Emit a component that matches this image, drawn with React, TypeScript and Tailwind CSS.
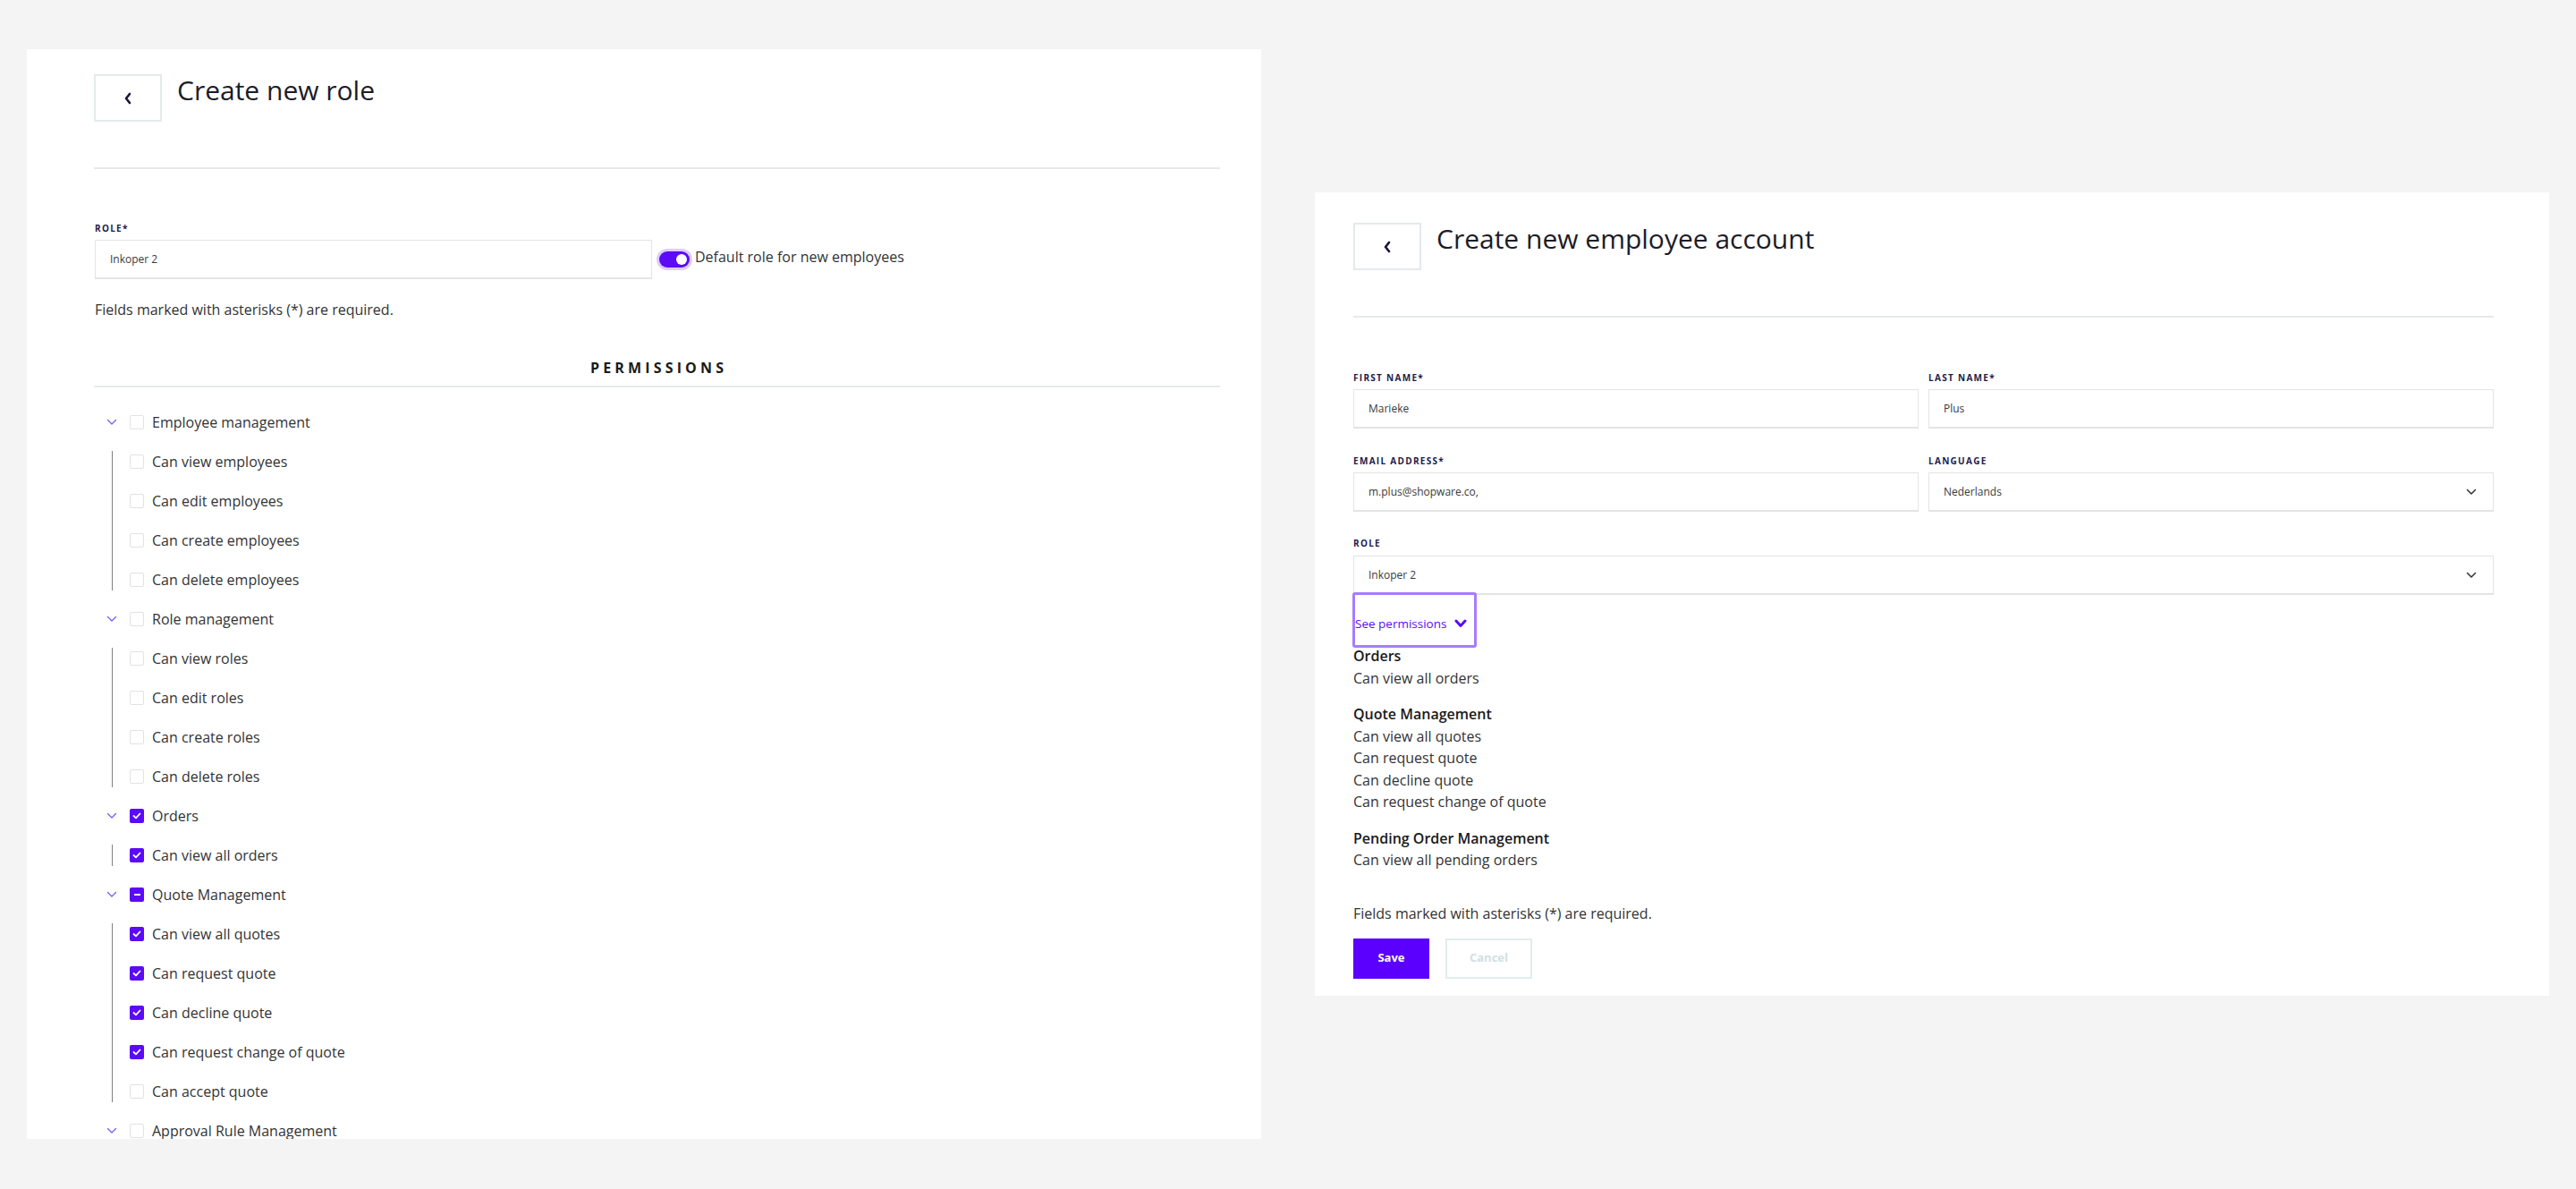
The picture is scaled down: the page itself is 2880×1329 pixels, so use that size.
import React from "react";

const FONT = "font-['Open_Sans','Liberation_Sans',sans-serif]";

type Perm = { label: string; checked?: boolean };
type Group = { label: string; state: "none" | "checked" | "partial"; children: Perm[] };

const TREE: Group[] = [
  {
    label: "Employee management",
    state: "none",
    children: [
      { label: "Can view employees" },
      { label: "Can edit employees" },
      { label: "Can create employees" },
      { label: "Can delete employees" },
    ],
  },
  {
    label: "Role management",
    state: "none",
    children: [
      { label: "Can view roles" },
      { label: "Can edit roles" },
      { label: "Can create roles" },
      { label: "Can delete roles" },
    ],
  },
  {
    label: "Orders",
    state: "checked",
    children: [{ label: "Can view all orders", checked: true }],
  },
  {
    label: "Quote Management",
    state: "partial",
    children: [
      { label: "Can view all quotes", checked: true },
      { label: "Can request quote", checked: true },
      { label: "Can decline quote", checked: true },
      { label: "Can request change of quote", checked: true },
      { label: "Can accept quote" },
    ],
  },
  { label: "Approval Rule Management", state: "none", children: [] },
];

const SUMMARY: { title: string; items: string[] }[] = [
  { title: "Orders", items: ["Can view all orders"] },
  {
    title: "Quote Management",
    items: [
      "Can view all quotes",
      "Can request quote",
      "Can decline quote",
      "Can request change of quote",
    ],
  },
  { title: "Pending Order Management", items: ["Can view all pending orders"] },
];

function BackButton() {
  return (
    <button className="w-[76px] h-[53px] shrink-0 border-2 border-[#e3eaec] bg-white grid place-items-center">
      <svg width="10" height="14" viewBox="0 0 10 14" fill="none">
        <path d="M7 2 L3 7 L7 12" stroke="#15153f" strokeWidth="2.6" strokeLinecap="round" strokeLinejoin="round" />
      </svg>
    </button>
  );
}

function Header({ title }: { title: string }) {
  return (
    <>
      <div className="flex items-start">
        <BackButton />
        <h1 className="ml-[17px] text-[30px] leading-[36px] font-normal text-[#1c1c28]">
          {title}
        </h1>
      </div>
      <div className="mt-[51px] h-[2px] bg-[#e7e9ea]" />
    </>
  );
}

function Label({ children }: { children: React.ReactNode }) {
  return (
    <div className="text-[10px] leading-[12px] font-bold uppercase tracking-[0.13em] text-[#1d1d4b]">
      {children}
    </div>
  );
}

function Field({ value, select }: { value: string; select?: boolean }) {
  return (
    <div className="h-[44px] border border-[#e4e4e4] border-b-2 bg-white flex items-center pl-[16px] pr-[18px] text-[12px] text-[#3a3a3a]">
      <span className="flex-1">{value}</span>
      {select && (
        <svg width="12" height="8" viewBox="0 0 12 8" fill="none">
          <path d="M1.5 1.5 L6 6 L10.5 1.5" stroke="#333" strokeWidth="1.5" strokeLinecap="round" strokeLinejoin="round" />
        </svg>
      )}
    </div>
  );
}

function Checkbox({ state }: { state: "none" | "checked" | "partial" }) {
  if (state === "none") {
    return <span className="w-[16px] h-[16px] shrink-0 rounded-[2px] border border-[#e2e2e2] bg-white" />;
  }
  return (
    <span className="w-[16px] h-[16px] shrink-0 rounded-[2px] bg-[#5b0bf5] grid place-items-center">
      {state === "checked" ? (
        <svg width="10" height="8" viewBox="0 0 10 8" fill="none">
          <path d="M1.5 4 L4 6.3 L8.5 1.5" stroke="white" strokeWidth="1.8" strokeLinecap="round" strokeLinejoin="round" />
        </svg>
      ) : (
        <span className="w-[7px] h-[2px] bg-white" />
      )}
    </span>
  );
}

function TreeChevron() {
  return (
    <svg width="12" height="8" viewBox="0 0 12 8" fill="none">
      <path d="M1.5 1.5 L6 6 L10.5 1.5" stroke="#7a5cf0" strokeWidth="1.3" strokeLinecap="round" strokeLinejoin="round" />
    </svg>
  );
}

function TreeRow({ label, state, chevron }: { label: string; state: "none" | "checked" | "partial"; chevron?: boolean }) {
  return (
    <div className="h-[44px] flex items-center">
      <div className="w-[40px] flex justify-center">{chevron && <TreeChevron />}</div>
      <Checkbox state={state} />
      <span className="ml-[9px] text-[16px] text-[#333]">{label}</span>
    </div>
  );
}

function RoleCard() {
  return (
    <div className="w-[1380px] h-[1218px] shrink-0 bg-white overflow-hidden pl-[75px] pr-[46px] pt-[28px]">
      <Header title="Create new role" />

      <div className="mt-[60px] pl-[1px]">
        <Label>Role*</Label>
        <div className="mt-[7px] flex items-center">
          <div className="w-[623px]">
            <Field value="Inkoper 2" />
          </div>
          <span className="ml-[5px] w-[40px] h-[24px] rounded-full bg-[#ddccff] grid place-items-center">
            <span className="w-[34px] h-[18px] rounded-full bg-[#5b0bf5] flex items-center justify-end pr-[3px]">
              <span className="w-[12px] h-[12px] rounded-full bg-white" />
            </span>
          </span>
          <span className="ml-[3px] -mt-[6px] text-[16px] text-[#333]">Default role for new employees</span>
        </div>
        <p className="mt-[24px] text-[16px] leading-[20px] text-[#333]">
          Fields marked with asterisks (*) are required.
        </p>
      </div>

      <h2 className="mt-[45px] pl-[0.26em] text-center text-[16px] leading-[20px] font-bold uppercase tracking-[0.26em] text-[#1a1a1a]">
        Permissions
      </h2>
      <div className="mt-[10px] h-[2px] bg-[#e7e9ea]" />

      <div className="mt-[17px]">
        {TREE.map((g) => (
          <div key={g.label}>
            <TreeRow label={g.label} state={g.state} chevron />
            {g.children.length > 0 && (
              <div className="flex">
                <div className="w-[40px] flex justify-center py-[10px]">
                  <div className="w-px bg-[#808080]" />
                </div>
                <div className="-ml-[40px] flex-1">
                  {g.children.map((c) => (
                    <TreeRow key={c.label} label={c.label} state={c.checked ? "checked" : "none"} />
                  ))}
                </div>
              </div>
            )}
          </div>
        ))}
      </div>
    </div>
  );
}

function EmployeeCard() {
  return (
    <div className="w-[1380px] h-[898px] shrink-0 mt-[160px] bg-white pl-[43px] pr-[62px] pt-[34px]">
      <Header title="Create new employee account" />

      <div className="mt-[61px] grid grid-cols-2 gap-x-[11px]">
        <div>
          <Label>First name*</Label>
          <div className="mt-[7px]">
            <Field value="Marieke" />
          </div>
        </div>
        <div>
          <Label>Last name*</Label>
          <div className="mt-[7px]">
            <Field value="Plus" />
          </div>
        </div>
        <div className="mt-[30px]">
          <Label>Email address*</Label>
          <div className="mt-[7px]">
            <Field value="m.plus@shopware.co," />
          </div>
        </div>
        <div className="mt-[30px]">
          <Label>Language</Label>
          <div className="mt-[7px]">
            <Field value="Nederlands" select />
          </div>
        </div>
      </div>

      <div className="mt-[29px]">
        <Label>Role</Label>
        <div className="mt-[8px]">
          <Field value="Inkoper 2" select />
        </div>
      </div>

      <button className="-mt-[3px] -ml-[1px] w-[139px] h-[62px] border-[3px] border-[#a77cff] rounded-[3px] flex items-center pt-[8px] text-[13.5px] text-[#5b0bf5]">
        <span>See permissions</span>
        <svg className="ml-[9px]" width="14" height="10" viewBox="0 0 14 10" fill="none">
          <path d="M2 2 L7 7.5 L12 2" stroke="#5b0bf5" strokeWidth="3" strokeLinecap="round" strokeLinejoin="round" />
        </svg>
      </button>

      <div className="-mt-[3px] text-[16px] leading-[24.5px] text-[#333]">
        {SUMMARY.map((s, i) => (
          <div key={s.title} className={i > 0 ? "mt-[16px]" : ""}>
            <div className="font-semibold text-[#1a1a1a]">{s.title}</div>
            {s.items.map((it) => (
              <div key={it}>{it}</div>
            ))}
          </div>
        ))}
      </div>

      <p className="mt-[37px] text-[16px] leading-[20px] text-[#333]">
        Fields marked with asterisks (*) are required.
      </p>

      <div className="mt-[18px] flex gap-[18px]">
        <button className="w-[85px] h-[45px] bg-[#5b00ff] text-white text-[13px] font-bold">Save</button>
        <button className="w-[97px] h-[45px] border-2 border-[#e2eded] bg-white text-[#cfe1e1] text-[13px] font-bold">
          Cancel
        </button>
      </div>
    </div>
  );
}

export default function App() {
  return (
    <div className={`${FONT} w-[2880px] h-[1329px] overflow-hidden bg-[#f4f4f4] flex items-start gap-[60px] pl-[30px] pt-[55px]`}>
      <RoleCard />
      <EmployeeCard />
    </div>
  );
}
